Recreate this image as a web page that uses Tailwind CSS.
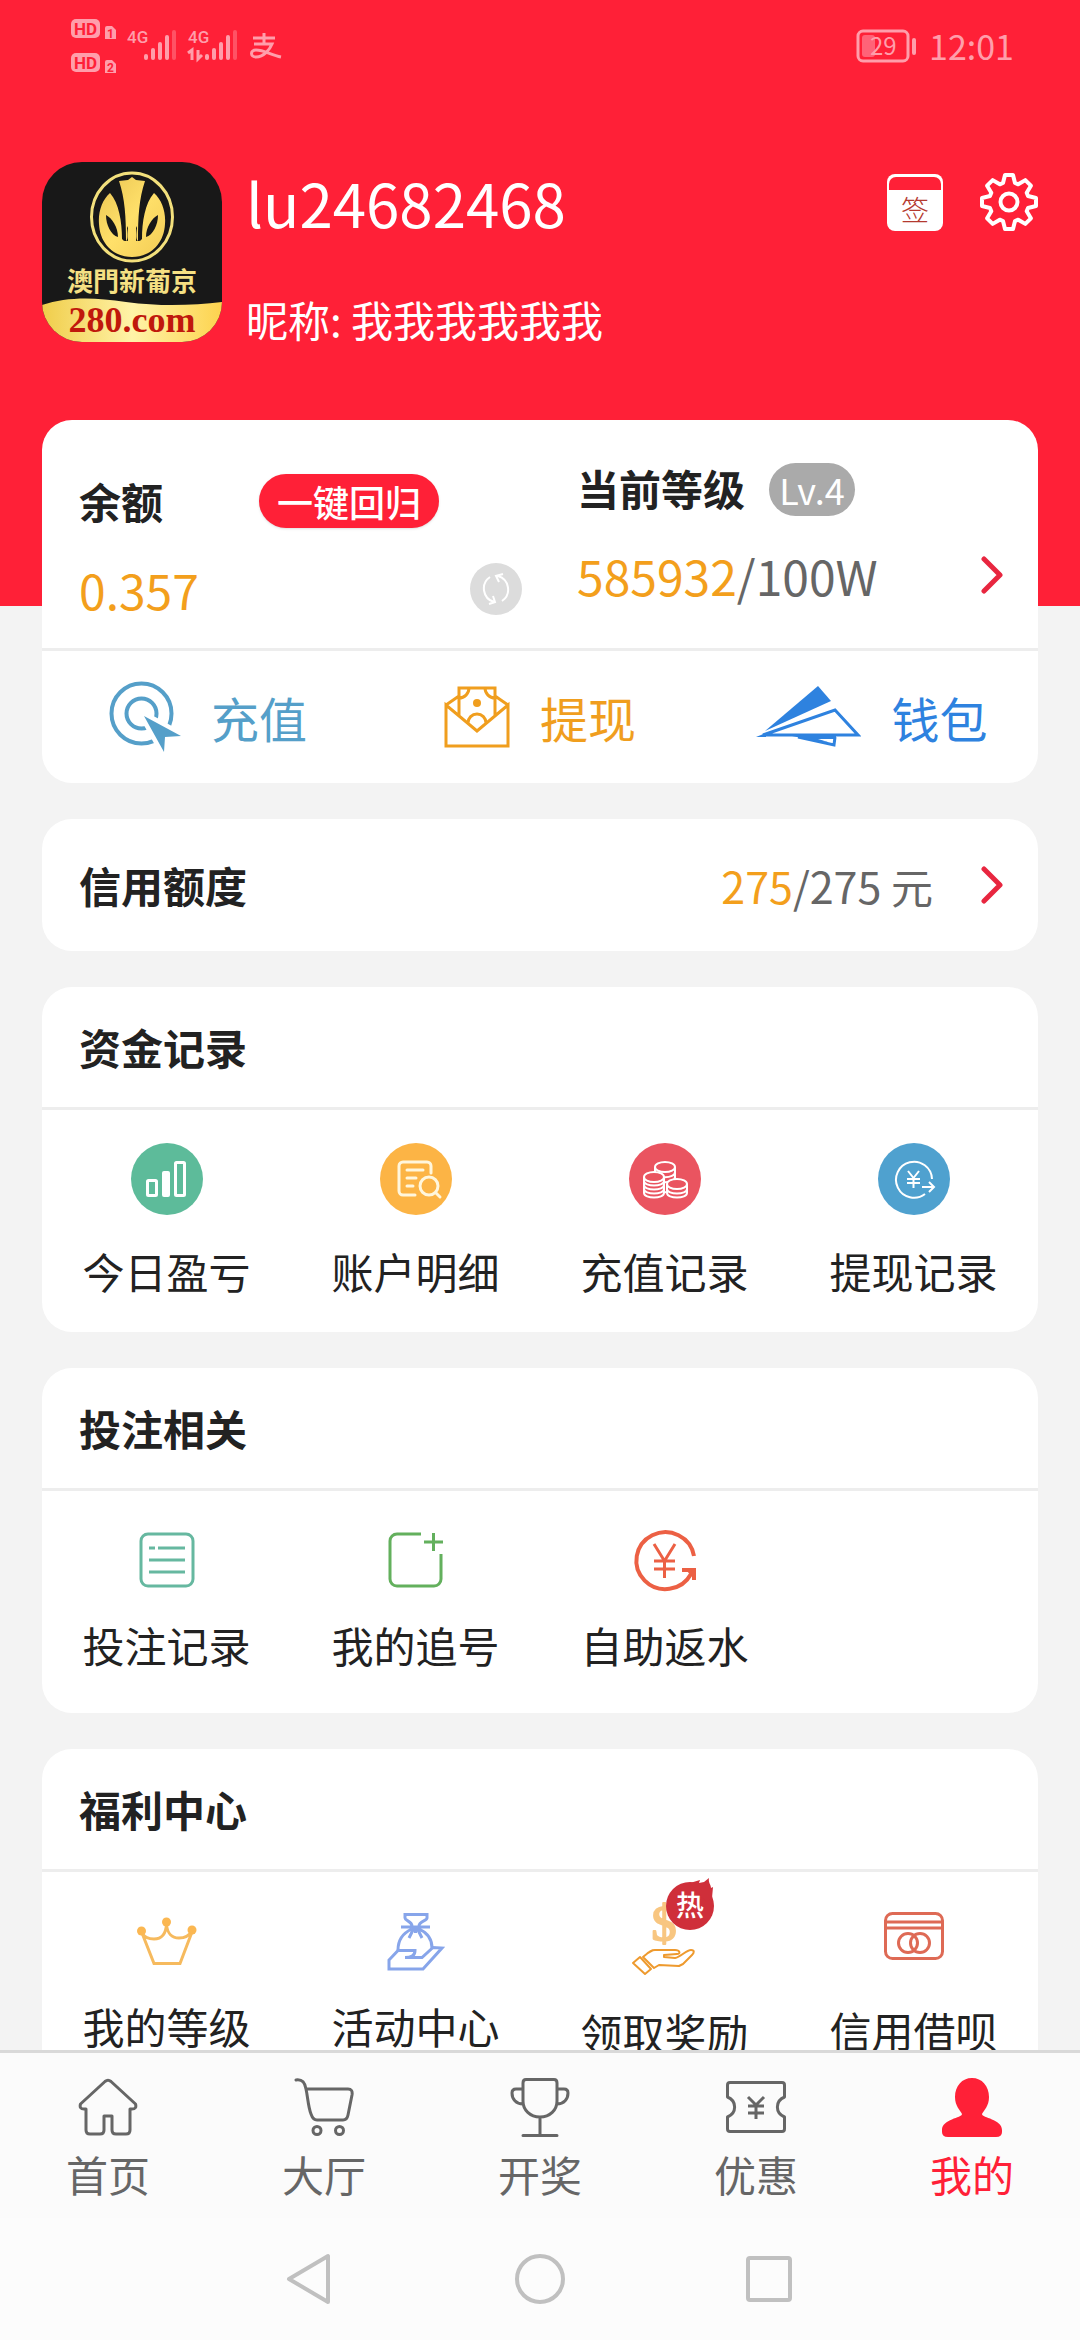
<!DOCTYPE html>
<html lang="zh-CN">
<head>
    <meta charset="UTF-8">
    <meta name="viewport" content="width=device-width, initial-scale=1.0">
    <title>我的</title>
    <script src="https://cdn.jsdelivr.net/npm/@tailwindcss/browser@4"></script>
</head>
<body class="flex h-screen flex-col bg-[#f3f3f3] font-['Noto_Sans_CJK_SC',sans-serif] text-[42px] text-[#222]">
    <main class="min-h-0 flex-1 overflow-y-auto [scrollbar-width:none]">
        <header class="h-[606px] bg-[#ff2037] text-white">
            <!-- status bar -->
            <div class="flex h-[92px] items-center justify-between pr-[66px] pl-[71px] text-[#ff9eab]">
                <svg class="h-[64px] w-[212px]" viewBox="0 0 212 64" fill="currentColor">
                    <rect x="0" y="5" width="29" height="19" rx="5"/>
                    <rect x="0" y="39" width="29" height="19" rx="5"/>
                    <g font-family="Roboto, sans-serif" font-weight="700">
                        <text x="3" y="21" font-size="17" fill="#ff2037">HD</text>
                        <text x="3" y="55" font-size="17" fill="#ff2037">HD</text>
                        <path d="M34 14a2 2 0 0 1 2-2h5l4 4v9H34zM34 48a2 2 0 0 1 2-2h5l4 4v9H34z"/>
                        <text x="36" y="24" font-size="12" fill="#ff2037">1</text>
                        <text x="36" y="58" font-size="12" fill="#ff2037">2</text>
                        <text x="56" y="29" font-size="17" font-weight="500">4G</text>
                        <text x="117" y="29" font-size="17" font-weight="500">4G</text>
                    </g>
                    <rect x="73" y="40" width="4" height="6" rx="2"/>
                    <rect x="80" y="34" width="4" height="12" rx="2"/>
                    <rect x="87" y="28" width="4" height="18" rx="2"/>
                    <rect x="94" y="21" width="4" height="25" rx="2"/>
                    <rect x="101" y="16" width="4" height="30" rx="2" opacity=".4"/>
                    <rect x="134" y="40" width="4" height="6" rx="2"/>
                    <rect x="141" y="34" width="4" height="12" rx="2"/>
                    <rect x="148" y="28" width="4" height="18" rx="2"/>
                    <rect x="155" y="21" width="4" height="25" rx="2"/>
                    <rect x="162" y="16" width="4" height="30" rx="2" opacity=".4"/>
                    <path d="M117 39l4-3v10M127 36v9l4-4" fill="none" stroke="currentColor" stroke-width="3"/>
                    <path d="M182 24h22M193 19v11M183 30h18c-2 5-8 13-16 13-6 0-6-7 0-7 8 0 15 5 25 7" fill="none" stroke="currentColor" stroke-width="3"/>
                </svg>
                <div class="flex items-center gap-3">
                    <svg class="h-[34px] w-[61px] overflow-visible" viewBox="0 0 61 34" fill="none">
                        <rect x="2" y="2" width="50" height="30" rx="5" stroke="currentColor" stroke-width="3"/>
                        <rect x="6" y="6" width="13" height="22" rx="3" fill="#ff6378"/>
                        <rect x="56" y="9" width="4" height="17" rx="2" fill="currentColor"/>
                        <text x="14" y="26" font-size="24" fill="currentColor">29</text>
                    </svg>
                    <span class="text-[34px] leading-[34px]">12:01</span>
                </div>
            </div>

            <!-- profile -->
            <div class="flex items-start px-[42px] pt-[70px]">
                <svg class="size-[180px] shrink-0 rounded-[40px]" viewBox="0 0 180 180">
                    <defs>
                        <linearGradient id="gold" x1="0" y1="0" x2="1" y2="1">
                            <stop offset="0" stop-color="#e9c452"/>
                            <stop offset=".5" stop-color="#ffe06a"/>
                            <stop offset="1" stop-color="#f3cc55"/>
                        </linearGradient>
                        <linearGradient id="banner">
                            <stop offset="0" stop-color="#f0cd4a"/>
                            <stop offset=".5" stop-color="#fff3a8"/>
                            <stop offset="1" stop-color="#fdd34e"/>
                        </linearGradient>
                    </defs>
                    <rect width="180" height="180" fill="#181818"/>
                    <ellipse cx="90" cy="55" rx="40.5" ry="44" fill="none" stroke="#f3e07c" stroke-width="3"/>
                    <path d="M68 31C60 38 56 50 57 62c1 20 15 33 33 33s32-13 33-33c1-12-3-24-11-31-9 10-12 29-12 46-2 2-3 2-4 2 0-24 1-42 7-60l-9-1-4-3-4 3-9 1c6 18 7 36 7 60-1 0-2 0-4-2 0-17-3-36-12-46z" fill="url(#gold)"/>
                    <path d="M81 78c3 2 6 2 4-12l1-2v15zM99 78c-3 2-6 2-4-12l-1-2v15z" fill="#181818"/>
                    <path d="M64 53c6 3 12 12 12 22-7-2-12-12-12-22zM116 53c-6 3-12 12-12 22 7-2 12-12 12-22z" fill="#181818"/>
                    <text x="90" y="129" text-anchor="middle" font-family="'Noto Sans CJK TC', sans-serif" font-weight="700" font-size="26" fill="#f5e083">澳門新葡京</text>
                    <path d="M0 143c25-8 50-8 84-3 38 5 68 3 96 0v40H0z" fill="url(#banner)"/>
                    <text x="90" y="170" text-anchor="middle" font-family="'Liberation Serif', serif" font-weight="700" font-size="36" fill="#c0180c">280.com</text>
                </svg>
                <div class="ml-6 flex-1">
                    <h1 class="text-[60px] leading-[80px]">lu24682468</h1>
                    <p class="mt-[53px] leading-[48px]">昵称: 我我我我我我</p>
                </div>
                <div class="mt-[11px] flex gap-9">
                    <button type="button" aria-label="签到">
                        <svg class="size-[58px]" viewBox="0 0 58 58">
                            <rect x="1" y="1" width="56" height="57" rx="8" fill="#fff"/>
                            <path d="M3 17V11a7 7 0 0 1 7-7H48a7 7 0 0 1 7 7v6z" fill="#ff2037"/>
                            <text x="29" y="48" text-anchor="middle" font-weight="300" font-size="28" fill="#b4392f">签</text>
                        </svg>
                    </button>
                    <button type="button" aria-label="设置">
                        <svg class="size-[58px]" viewBox="-29 -29 58 58" fill="none" stroke="#fff" stroke-width="4" stroke-linejoin="round">
                            <path d="M-6-19-4-27H4L6-19 9.2-17.7 16.3-21.9 21.9-16.3 17.7-9.2 19-6 27-4V4L19 6 17.7 9.2 21.9 16.3 16.3 21.9 9.2 17.7 6 19 4 27H-4L-6 19-9.2 17.7-16.3 21.9-21.9 16.3-17.7 9.2-19 6-27 4V-4L-19-6-17.7-9.2-21.9-16.3-16.3-21.9-9.2-17.7z"/>
                            <circle r="8.5"/>
                        </svg>
                    </button>
                </div>
            </div>
        </header>

        <div class="-mt-[186px] flex flex-col gap-9 px-[42px]">
            <!-- balance -->
            <section class="rounded-[30px] bg-white">
                <div class="grid h-[231px] grid-cols-2 border-b-[3px] border-[#ededed]">
                    <div class="pt-[54px] pr-[18px] pl-[37px]">
                        <div class="flex h-[54px] items-center gap-24">
                            <h2 class="font-bold leading-[54px]">余额</h2>
                            <button type="button" class="h-[54px] w-[180px] rounded-full bg-[#ff2037] text-[36px] leading-[52px] font-medium text-white shadow-sm">一键回归</button>
                        </div>
                        <div class="mt-[35px] flex h-[52px] items-center justify-between">
                            <span class="text-[48px] leading-[52px] text-[#f39f1c]">0.357</span>
                            <button type="button" aria-label="刷新">
                                <svg class="size-[52px]" viewBox="0 0 52 52" fill="none" stroke="#fff" stroke-width="2">
                                    <circle cx="26" cy="26" r="26" fill="#dcdcdc" stroke="none"/>
                                    <path d="M20 14a14 14 0 0 0 4 25M19 41l6-2-2-6M32 38a14 14 0 0 0-4-25M33 11l-7 2 3 6"/>
                                </svg>
                            </button>
                        </div>
                    </div>
                    <div class="pt-[43px] pr-[35px] pl-[37px]">
                        <div class="flex h-[53px] items-center gap-6">
                            <h2 class="pb-1 font-bold leading-[49px]">当前等级</h2>
                            <span class="h-[53px] w-[86px] rounded-full bg-[#aaa] text-center text-[36px] leading-[53px] text-white">Lv.4</span>
                        </div>
                        <a href="#" class="mt-[33px] flex h-[52px] items-center justify-between">
                            <span class="text-[48px] leading-[52px] text-[#666]"><span class="text-[#f39f1c]">585932</span>/100W</span>
                            <svg class="h-10 w-[22px]" viewBox="0 0 22 40" fill="none" stroke="#e8263f" stroke-width="5" stroke-linecap="round" stroke-linejoin="round"><path d="M3 4l16 16L3 36"/></svg>
                        </a>
                    </div>
                </div>
                <div class="grid h-[132px] grid-cols-3 text-[48px] leading-[68px]">
                    <a href="#" class="flex items-center justify-center gap-[30px] text-[#559fc9]">
                        <svg class="size-[72px]" viewBox="0 0 72 72" fill="none" stroke="currentColor" stroke-width="4">
                            <circle cx="32.5" cy="32.5" r="30"/>
                            <circle cx="32.5" cy="32.5" r="15"/>
                            <path d="M35 35 72 55 56 56 55 71z" fill="#fff" stroke="#fff" stroke-width="9"/>
                            <path d="M35 35 72 55 56 56 55 71z" fill="currentColor" stroke="none"/>
                        </svg>
                        <span>充值</span>
                    </a>
                    <a href="#" class="flex items-center justify-center gap-[30px] text-[#f09e1e]">
                        <svg class="h-[62px] w-[66px]" viewBox="0 0 66 62" fill="none" stroke="currentColor" stroke-width="3">
                            <path d="M2 19V60H64V19L33 45zM2 19 15 10M64 19 51 10M15 29V2H51V29M25 2a10 10 0 0 1-10 10M41 2a10 10 0 0 0 10 10M24 37a9 9 0 0 1 18 0"/>
                            <circle cx="33" cy="17" r="4" fill="currentColor" stroke="none"/>
                        </svg>
                        <span>提现</span>
                    </a>
                    <a href="#" class="flex items-center justify-center gap-[30px] text-[#2e82df]">
                        <svg class="h-[62px] w-[105px]" viewBox="0 0 105 62" fill="none" stroke="currentColor" stroke-width="3">
                            <path d="M62 0 75 15 9 45z" fill="currentColor" stroke="none"/>
                            <path d="M0 51 10 47V51z" fill="currentColor" stroke="none"/>
                            <path d="M7 49 79 24 102 49z"/>
                            <path d="M42 51 78 59 79 51"/>
                            <path d="M36 50H80V53H62L72 56 60 55z" fill="currentColor" stroke="none"/>
                        </svg>
                        <span>钱包</span>
                    </a>
                </div>
            </section>

            <!-- credit -->
            <a href="#" class="flex h-[132px] items-center rounded-[30px] bg-white pr-[35px] pl-[37px] leading-[60px]">
                <span class="flex-1 font-bold">信用额度</span>
                <span class="text-[#666]"><span class="text-[43px]"><span class="text-[#f39f1c]">275</span>/275 </span>元</span>
                <svg class="ml-12 h-10 w-[22px]" viewBox="0 0 22 40" fill="none" stroke="#e8263f" stroke-width="5" stroke-linecap="round" stroke-linejoin="round"><path d="M3 4l16 16L3 36"/></svg>
            </a>

            <!-- funds -->
            <section class="rounded-[30px] bg-white">
                <h2 class="h-[123px] border-b-[3px] border-[#ededed] pl-[37px] leading-[120px] font-bold">资金记录</h2>
                <div class="grid h-[222px] grid-cols-4 pt-[33px] leading-[60px]">
                    <a href="#" class="flex flex-col items-center gap-[26px]">
                        <svg class="size-[72px]" viewBox="0 0 72 72" fill="none" stroke="#fff" stroke-width="3">
                            <circle cx="36" cy="36" r="36" fill="#5dbb9a" stroke="none"/>
                            <rect x="16.500" y="37.500" width="9" height="15" rx="1"/>
                            <rect x="31" y="28" width="8" height="26" rx="2" fill="#fff" stroke="none"/>
                            <rect x="44.500" y="19.500" width="9" height="33" rx="1"/>
                        </svg>
                        <span>今日盈亏</span>
                    </a>
                    <a href="#" class="flex flex-col items-center gap-[26px]">
                        <svg class="size-[72px]" viewBox="0 0 72 72" fill="none" stroke="#fff6dc" stroke-width="3" stroke-linecap="round">
                            <circle cx="36" cy="36" r="36" fill="#fcb445" stroke="none"/>
                            <path d="M51 30V23a4 4 0 0 0-4-4H23a4 4 0 0 0-4 4V48a4 4 0 0 0 4 4H35M27 27H43M27 35H36M27 43H33M56 50 60 54"/>
                            <circle cx="49" cy="43" r="9"/>
                        </svg>
                        <span>账户明细</span>
                    </a>
                    <a href="#" class="flex flex-col items-center gap-[26px]">
                        <svg class="size-[72px]" viewBox="0 0 72 72" fill="#ea5460" stroke="#fff" stroke-width="2">
                            <circle cx="36" cy="36" r="36" stroke="none"/>
                            <path d="M26 24V44c0 7 20 7 20 0V24"/>
                            <path d="M26 29c0 7 20 7 20 0M26 34c0 7 20 7 20 0" fill="none"/>
                            <ellipse cx="36" cy="24" rx="10" ry="5"/>
                            <path d="M15 34V50c0 6 20 6 20 0V34"/>
                            <path d="M15 38c0 6 20 6 20 0M15 42c0 6 20 6 20 0M15 46c0 6 20 6 20 0" fill="none"/>
                            <ellipse cx="25" cy="34" rx="10" ry="5"/>
                            <path d="M38 41V50c0 6 20 6 20 0V41"/>
                            <path d="M38 46c0 6 20 6 20 0" fill="none"/>
                            <ellipse cx="48" cy="41" rx="10" ry="5"/>
                        </svg>
                        <span>充值记录</span>
                    </a>
                    <a href="#" class="flex flex-col items-center gap-[26px]">
                        <svg class="size-[72px]" viewBox="0 0 72 72" fill="none" stroke="#fff" stroke-width="2">
                            <circle cx="36" cy="36" r="36" fill="#4fa1cf" stroke="none"/>
                            <path d="M54 36a18 18 0 1 0-7 15M44 44H56M51 39 56 44 51 49"/>
                            <path d="M30 28 35.5 35 41 28M35.5 35V45M29 36H42M29 40H42"/>
                        </svg>
                        <span>提现记录</span>
                    </a>
                </div>
            </section>

            <!-- bets -->
            <section class="rounded-[30px] bg-white">
                <h2 class="h-[123px] border-b-[3px] border-[#ededed] pl-[37px] leading-[120px] font-bold">投注相关</h2>
                <div class="grid h-[222px] grid-cols-4 pt-[39px] leading-[60px]">
                    <a href="#" class="flex flex-col items-center gap-[25px]">
                        <svg class="size-[60px]" viewBox="0 0 60 60" fill="none" stroke="#66b8a0" stroke-width="3">
                            <rect x="4" y="4" width="52" height="52" rx="7"/>
                            <path d="M12 18H18M21 18H48M12 30H48M12 42H48"/>
                        </svg>
                        <span>投注记录</span>
                    </a>
                    <a href="#" class="flex flex-col items-center gap-[25px]">
                        <svg class="size-[60px]" viewBox="0 0 60 60" fill="none" stroke="#63b05d" stroke-width="3">
                            <path d="M35 4H11a7 7 0 0 0-7 7V49a7 7 0 0 0 7 7H48a7 7 0 0 0 7-7V24M38 12H57M47.5 3V21"/>
                        </svg>
                        <span>我的追号</span>
                    </a>
                    <a href="#" class="flex flex-col items-center gap-[25px]">
                        <svg class="size-[60px] overflow-visible" viewBox="0 0 60 60" fill="none" stroke="#ec6044" stroke-width="4">
                            <path d="M59 26a29 28.5 0 1 0-3 18M47 40H59V50"/>
                            <path d="M19 14 29.5 31 40 14M29.5 31V48M19 31H40M19 39H40" stroke-width="3"/>
                            <path d="M51 40H60V50z" fill="#ec6044" stroke="none"/>
                        </svg>
                        <span>自助返水</span>
                    </a>
                </div>
            </section>

            <!-- welfare -->
            <section class="rounded-[30px] bg-white">
                <h2 class="h-[123px] border-b-[3px] border-[#ededed] pl-[37px] leading-[120px] font-bold">福利中心</h2>
                <div class="grid h-[222px] grid-cols-4 pt-[39px] leading-[60px]">
                    <a href="#" class="flex flex-col items-center gap-[25px]">
                        <svg class="size-[60px]" viewBox="0 0 60 60" fill="none" stroke="#f6ba5e" stroke-width="3">
                            <path d="M5 22 17 52.5H43L55 21M5 22C8 27 12 28 17 28 25 28 29 22 29.5 13 30 22 35 27 42 27 48 27 52 25 55 20"/>
                            <g fill="#fbb751" stroke="none"><circle cx="4.500" cy="20" r="4.500"/><circle cx="29.500" cy="11" r="4.500"/><circle cx="55" cy="19" r="4.500"/></g>
                        </svg>
                        <span>我的等级</span>
                    </a>
                    <a href="#" class="flex flex-col items-center gap-[25px]">
                        <svg class="size-[60px]" viewBox="0 0 60 60" fill="none" stroke="#87a5ea" stroke-width="3">
                            <path d="M26 15C26 10 19 10 19 7V3.500H41V7C41 10 33 10 33 15M15 16H44M26 18C17 22 12 29 12 39M33 18C42 22 46 28 46 37M28 17 23 27M31 17 36 27M29.500 17V22"/>
                            <path d="M3 58V49L12 39.500H29C29 44 26 46.500 19 46.500H36L47 36.500 56 37 37 58z"/>
                        </svg>
                        <span>活动中心</span>
                    </a>
                    <a href="#" class="relative flex flex-col items-center gap-[25px]">
                        <svg class="h-[66px] w-[60px] overflow-visible" viewBox="0 0 60 66" fill="none" stroke="#ee9a2e" stroke-width="2" stroke-linejoin="round">
                            <text x="29" y="29" text-anchor="middle" font-family="'Liberation Serif', serif" font-size="50" fill="#f8c681" stroke="#f8c681">$</text>
                            <path d="M-2 52 5 46 16 58 10 63z"/>
                            <path d="M8 46C14 41 16 39 20 39H40C45 39 46 43 42 43L29 44V46L40 47C46 46 51 39 56 39 60 39 59 42 57 44L48 53 44 55 24 54 19 57z"/>
                        </svg>
                        <span>领取奖励</span>
                        <!-- hot badge -->
                        <svg class="absolute -top-[33px] left-[126px] h-[52px] w-12" viewBox="0 0 48 52" fill="#cf2f3a">
                            <circle cx="24" cy="28" r="24"/>
                            <path d="M24 5 34 2 33 5 38 4 43 0C42 5 45 6 45 10L47 9 46 20 40 24z"/>
                            <text x="24" y="38" text-anchor="middle" font-size="28" font-weight="500" fill="#fff">热</text>
                        </svg>
                    </a>
                    <a href="#" class="flex flex-col items-center gap-[25px]">
                        <svg class="h-[64px] w-[60px]" viewBox="0 0 60 64" fill="none" stroke="#de6a55" stroke-width="3">
                            <rect x="1.500" y="2.500" width="57" height="45" rx="7"/>
                            <path d="M2 11H58M2 17H58"/>
                            <circle cx="24" cy="32" r="9.500"/><circle cx="36" cy="32" r="9.500"/>
                        </svg>
                        <span>信用借呗</span>
                    </a>
                </div>
            </section>
        </div>
    </main>

    <nav class="grid grid-cols-5 border-t-[3px] border-[#d9d9d9] bg-[#fbfbfb] pt-[25px] pb-5 leading-[48px] text-[#666]">
        <a href="#" class="flex flex-col items-center gap-3">
            <svg class="size-[60px]" viewBox="0 0 60 60" fill="none" stroke="currentColor" stroke-width="3" stroke-linejoin="round">
                <path d="M27 3.500Q30 1 33 3.500L57.500 26Q59 31 54 31H52V52Q52 56 48 56H38Q34 56 34 52V38H26V52Q26 56 22 56H12Q8 56 8 52V31H6Q1 31 2.500 26z"/>
            </svg>
            <span>首页</span>
        </a>
        <a href="#" class="flex flex-col items-center gap-3">
            <svg class="size-[60px]" viewBox="0 0 60 60" fill="none" stroke="currentColor" stroke-width="3" stroke-linecap="round">
                <path d="M2 2C9 1 11 5 12 11H54Q59 11 58 17L54 37Q53 42 49 42H23Q19 42 17 36C14 28 14 20 12 11"/>
                <circle cx="23" cy="52.500" r="4"/><circle cx="45.500" cy="52.500" r="4"/>
            </svg>
            <span>大厅</span>
        </a>
        <a href="#" class="flex flex-col items-center gap-3">
            <svg class="size-[60px]" viewBox="0 0 60 60" fill="none" stroke="currentColor" stroke-width="3" stroke-linecap="round">
                <path d="M16 1.500H44Q47 1.500 47 5V23C47 32 40 39 30 39S13 32 13 23V5Q13 1.500 16 1.500zM13 11H6Q2 11 2 15C2 21 6 26 13 26M47 11H54Q58 11 58 15C58 21 54 26 47 26M30 39V57M13 57.500H47"/>
            </svg>
            <span>开奖</span>
        </a>
        <a href="#" class="flex flex-col items-center gap-3">
            <svg class="size-[60px]" viewBox="0 0 60 60" fill="none" stroke="currentColor" stroke-width="3" stroke-linejoin="round">
                <path d="M4 4.500H56Q58.500 4.500 58.500 7V19C49 23 49 35 58.500 39V51Q58.500 53.500 56 53.500H4Q1.500 53.500 1.500 51V39C11 35 11 23 1.500 19V7Q1.500 4.500 4 4.500z"/>
                <path d="M22 19 30 27 38 19M30 27V41M22 28H38M22 35H38"/>
            </svg>
            <span>优惠</span>
        </a>
        <a href="#" class="flex flex-col items-center gap-3 text-[#ff2037]">
            <svg class="size-[60px]" viewBox="0 0 60 60" fill="currentColor">
                <path d="M30 0C40 0 47 8 47 19 47 28 42 32 40 36 40 40 60 41 60 52V54Q60 59 54 59H6Q0 59 0 54V52C0 41 20 40 20 36 18 32 13 28 13 19 13 8 20 0 30 0z"/>
            </svg>
            <span>我的</span>
        </a>
    </nav>

    <div class="flex h-[122px] items-center justify-center gap-[178px] bg-[#fcfcfc]">
        <button type="button" aria-label="返回">
            <svg class="size-[52px]" viewBox="0 0 52 52" fill="none" stroke="#c0c0c0" stroke-width="4" stroke-linejoin="round"><path d="M44 3V49L5 26z"/></svg>
        </button>
        <button type="button" aria-label="主页">
            <svg class="size-[52px]" viewBox="0 0 52 52" fill="none" stroke="#c0c0c0" stroke-width="4"><circle cx="26" cy="26" r="23"/></svg>
        </button>
        <button type="button" aria-label="最近任务">
            <svg class="size-[52px]" viewBox="0 0 52 52" fill="none" stroke="#c0c0c0" stroke-width="4"><rect x="4" y="5" width="42" height="42" rx="2"/></svg>
        </button>
    </div>
</body>
</html>
